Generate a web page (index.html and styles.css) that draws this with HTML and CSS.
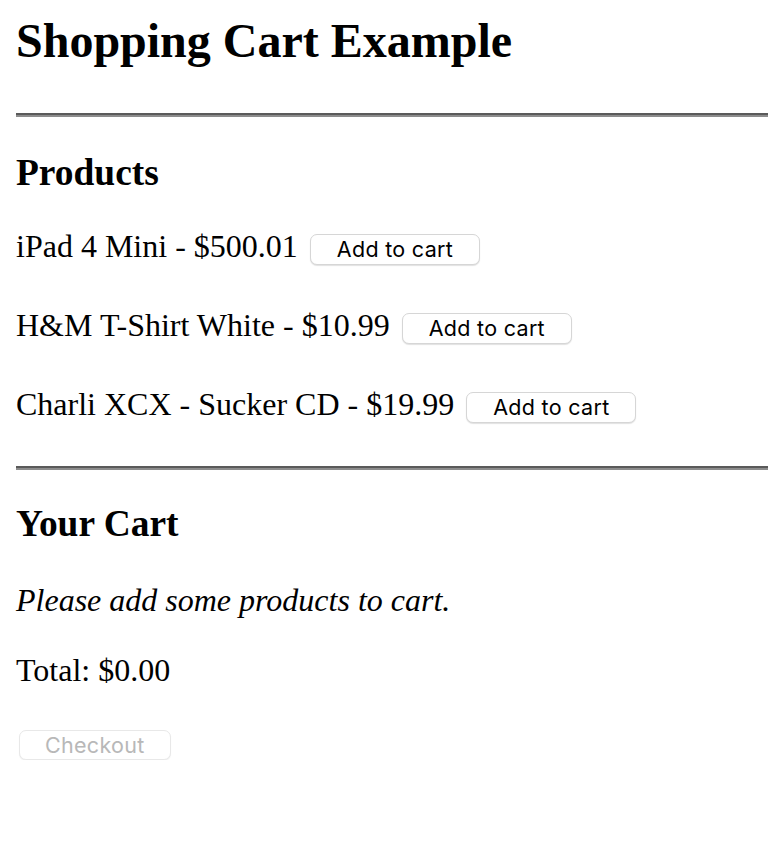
FILE: index.html
```html
<!DOCTYPE html>
<html lang="en">
<head>
    <meta charset="UTF-8">
    <meta name="viewport" content="width=device-width, initial-scale=1.0">
    <title>Shopping Cart Example</title>
    <link rel="stylesheet" href="styles.css">
</head>
<body>
    <div class="page">
        <h1 class="title">Shopping Cart Example</h1>
        <hr class="divider">

        <div class="products">
            <h2 class="section-title">Products</h2>
            <div class="product">
                <span class="product-name">iPad 4 Mini - $500.01</span>
                <button class="btn">Add to cart</button>
            </div>
            <div class="product">
                <span class="product-name">H&amp;M T-Shirt White - $10.99</span>
                <button class="btn">Add to cart</button>
            </div>
            <div class="product">
                <span class="product-name">Charli XCX - Sucker CD - $19.99</span>
                <button class="btn">Add to cart</button>
            </div>
        </div>

        <hr class="divider">

        <div class="cart">
            <h2 class="section-title cart-title">Your Cart</h2>
            <p class="cart-empty"><em>Please add some products to cart.</em></p>
            <p class="cart-total">Total: $0.00</p>
            <button class="btn btn-checkout" disabled>Checkout</button>
        </div>
    </div>
</body>
</html>
```

FILE: styles.css
```css
body {
    margin: 0;
    font-family: "Liberation Serif", "Times New Roman", serif;
    font-size: 32px;
    line-height: 1.15;
    color: #000;
    background: #fff;
}

.page {
    padding-left: 16px;
}

.title {
    font-size: 48px;
    font-weight: bold;
    margin: 13px 0 45px;
}

.divider {
    margin: 0;
    height: 0;
    border: none;
    border-top: 2px solid #5a5a5a;
    border-bottom: 2px solid #8c8c8c;
}

.section-title {
    font-size: 37.44px;
    font-weight: bold;
    margin: 34px 0 34px;
}

.product {
    display: flex;
    align-items: baseline;
    gap: 12px;
    margin-bottom: 42px;
}

.product:last-child {
    margin-bottom: 43px;
}

.btn {
    font-family: Inter, "Liberation Sans", sans-serif;
    font-size: 21.5px;
    letter-spacing: 0.3px;
    line-height: 25px;
    padding: 2px 26px;
    color: #000;
    background: #fff;
    border: 1px solid #d6d6d6;
    border-radius: 7px;
    box-shadow: 0 1px 1px rgba(0, 0, 0, 0.12);
}

.cart-title {
    margin: 32px 0 37px;
}

.cart-empty {
    margin: 0 0 33px;
}

.cart-total {
    margin: 0 0 41px;
}

.btn-checkout {
    display: block;
    margin-left: 3px;
    padding: 2px 25px;
    line-height: 24px;
    color: #b8b8b8;
    border-color: #e8e8e8;
    box-shadow: 0 1px 1px rgba(0, 0, 0, 0.06);
}
```
